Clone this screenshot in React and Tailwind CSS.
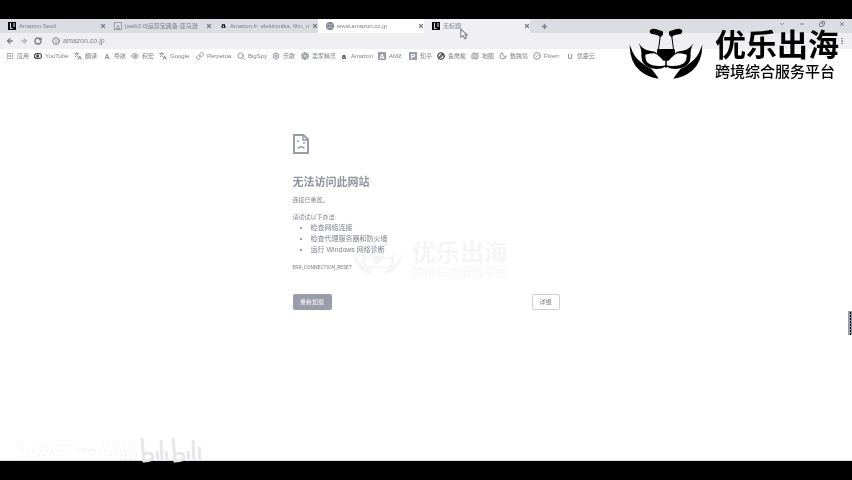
import { X, Plus, ArrowLeft, ArrowRight, RotateCw, Info, Globe, Grip, Youtube, Languages, Compass, Eye, Link, Search, Settings, Aperture, Map, Moon, CircleCheck, ChevronDown, Minus, Copy, EllipsisVertical } from "lucide-react";

const tabs = [
  { title: "Amazon Seoil", kind: "dark", tone: "bg-[#dcdde2]" },
  { title: "[web2.0]运营宝典备-亚马逊", kind: "box", tone: "bg-[#dcdde2]" },
  { title: "Amazon.fr: elektronika, film, n", kind: "a", tone: "bg-[#dcdde2]" },
  { title: "www.amazon.co.jp", kind: "globe", tone: "bg-white" },
  { title: "无标题", kind: "dark", tone: "bg-[#f0f0f3]" },
];

const bookmarks = [
  { label: "应用", icon: Grip, width: "w-[28px]" },
  { label: "YouTube", icon: Youtube, width: "w-[40px]", dark: true },
  { label: "翻译", icon: Languages, width: "w-[29px]" },
  { label: "导航", letter: "A", width: "w-[28px]" },
  { label: "积宏", icon: Eye, width: "w-[28px]" },
  { label: "Google", icon: Languages, width: "w-[37px]" },
  { label: "Perpetua", icon: Link, width: "w-[41px]" },
  { label: "BigSpy", icon: Search, width: "w-[35px]" },
  { label: "乐歌", icon: Settings, width: "w-[29px]" },
  { label: "卖家精灵", icon: Aperture, width: "w-[39px]" },
  { label: "Amazon", letter: "a", width: "w-[38px]", dark: true },
  { label: "AMZ", letter: "A", boxed: true, width: "w-[31px]" },
  { label: "知乎", letter: "P", boxed: true, width: "w-[28px]" },
  { label: "鱼鹰梭", icon: Compass, width: "w-[34px]", dark: true },
  { label: "地图", icon: Map, width: "w-[28px]" },
  { label: "数跨境", icon: Moon, width: "w-[34px]" },
  { label: "Fiverr", icon: CircleCheck, width: "w-[33px]" },
  { label: "优鹿云", letter: "U", width: "w-[34px]" },
];

const tips = ["检查网络连接", "检查代理服务器和防火墙", "运行 Windows 网络诊断"];

function TabIcon({ kind }) {
  if (kind === "globe") return <Globe className="size-2 text-[#7d8190]" strokeWidth={4} />;
  if (kind === "dark")
    return (
      <svg viewBox="0 0 8 8" className="size-2">
        <path d="M0 0h8v8H0z" fill="#0a0a0c" />
        <path d="M2.5 1v5.5h2M6 1v4" stroke="#e4e5ea" fill="none" />
      </svg>
    );
  if (kind === "a") return <span className="w-2 text-center text-[8px] font-bold text-black">a</span>;
  return <span className="grid size-2 place-items-center border border-[#9b9fab] text-[7px] text-[#8a8d9a]">A</span>;
}

function Bookmark({ item }) {
  const Icon = item.icon;
  const ink = item.dark ? "text-[#1d1d22]" : "text-[#8f93a0]";
  return (
    <a href="#" className={`flex shrink-0 items-center gap-[3px] ${item.width}`}>
      {Icon ? (
        <Icon className={`size-2 shrink-0 ${ink}`} strokeWidth={3} />
      ) : (
        <span className={`grid size-2 shrink-0 place-items-center text-[7px] font-bold ${item.boxed ? "bg-[#999ca9] text-white" : ink}`}>
          {item.letter}
        </span>
      )}
      <span className="whitespace-nowrap text-[6px]">{item.label}</span>
    </a>
  );
}

function TigerHalf() {
  return (
    <>
      <path d="M71 22Q72 14 82 14Q92 14 100 19L110 22Q113 27 110 34L104 39L99 76H96L101 38Q98 34 90 32L77 30Q71 28 71 22Z" />
      <path d="M11 62L16 74Q24 98 44 114Q60 128 76 134Q88 148 98 164Q66 160 42 140Q11 114 11 62Z" />
      <path d="M38 58Q48 73 62 78Q76 81 87 83L97 94L85 88Q72 88 58 92Q57 108 66 117Q78 126 98 126Q114 126 119 123H121V131L116 129Q108 135 92 135Q66 133 54 120Q46 111 46 96Q48 78 38 58Z" />
      <path d="M94 75H121V125H118V110H112Q106 102 98 96Q92 92 92 88Z" />
    </>
  );
}

function TigerLogo({ className }) {
  return (
    <svg viewBox="0 0 240 180" className={className} fill="currentColor" aria-hidden="true">
      <TigerHalf />
      <g transform="translate(240 0) scale(-1 1)">
        <TigerHalf />
      </g>
    </svg>
  );
}

function BrandOverlay() {
  return (
    <div className="absolute top-6 right-[13px] flex items-start gap-[9px] text-black">
      <TigerLogo className="h-[60px] w-20" />
      <div className="flex flex-col pt-1 whitespace-nowrap">
        <span className="text-[31px] leading-9 font-bold">优乐出海</span>
        <span className="text-[15px] leading-4 font-medium">跨境综合服务平台</span>
      </div>
    </div>
  );
}

function CenterMark() {
  return (
    <div aria-hidden="true" className="absolute top-[239px] left-[352px] flex gap-2 text-[#f5f5f7] mix-blend-multiply">
      <TigerLogo className="h-10 w-[52px]" />
      <div className="flex flex-col whitespace-nowrap">
        <span className="text-[24px] leading-7 font-bold">优乐出海</span>
        <span className="text-[12px] leading-3">跨境综合服务平台</span>
      </div>
    </div>
  );
}

function BottomMark() {
  return (
    <div aria-hidden="true" className="absolute bottom-[15px] left-[17px] flex">
      <svg viewBox="0 0 122 28" className="h-7 w-[122px]" fill="none" stroke="#dfe0e5" strokeDasharray="1 4">
        <path d="M1 3L5 8L1 12M6 14H18M1 20H17M19 9H60M24 14H52M22 18H46M30 22H44M86 8H121M78 14H118M94 18H120M98 22H120" />
        <path d="M61 13H79" strokeDasharray="1 1" />
      </svg>
      <svg viewBox="0 0 64 28" className="h-7 w-16" fill="none" stroke="#e6e7eb" strokeWidth="3">
        <path d="M3 1L5 24Q14 24 14 19Q13 15 5 17M18 14L19 24M22 3L23 24M27 14L28 24" />
        <path d="M34 1L36 24Q46 24 45 19Q44 15 36 17M49 14L50 24M54 3L55 24M60 10L61 24" />
      </svg>
    </div>
  );
}

export default function App() {
  return (
    <div className="relative flex min-h-screen flex-col bg-black py-[19px] font-['Liberation_Sans','Noto_Sans_CJK_SC',sans-serif] text-[#7b7f8d]">
      <header>
        <div className="flex h-[14px] bg-[#dcdde2]">
          {tabs.map((tab) => (
            <div key={tab.title} className={`flex w-[106px] items-center gap-[3px] pl-2 text-[6px] ${tab.tone}`}>
              <TabIcon kind={tab.kind} />
              <span className="flex-1 whitespace-nowrap">{tab.title}</span>
              <button aria-label="Close tab"><X className="size-[6px]" strokeWidth={5} /></button>
            </div>
          ))}
          <button aria-label="New tab" className="pl-[11px]"><Plus className="size-[7px]" strokeWidth={5} /></button>
          <div className="ml-auto flex items-center gap-[14px] pr-[7px] pb-1">
            <button aria-label="Search tabs"><ChevronDown className="size-[6px]" strokeWidth={4} /></button>
            <button aria-label="Minimize"><Minus className="size-[6px]" strokeWidth={4} /></button>
            <button aria-label="Restore"><Copy className="size-[6px] -scale-x-100" strokeWidth={4} /></button>
            <button aria-label="Close"><X className="size-[6px]" strokeWidth={4} /></button>
          </div>
        </div>
        <div className="flex h-4 items-center gap-1.5 bg-[#efeff2] px-1.5">
          <button aria-label="Back"><ArrowLeft className="size-2" strokeWidth={4} /></button>
          <button aria-label="Forward"><ArrowRight className="size-2 text-[#b5b8c2]" strokeWidth={4} /></button>
          <button aria-label="Reload"><RotateCw className="size-2" strokeWidth={4} /></button>
          <div className="ml-1 flex flex-1 items-center gap-[3px]">
            <Info className="size-2" strokeWidth={3} />
            <input aria-label="Address" defaultValue="amazon.co.jp" className="flex-1 bg-transparent text-[7px] leading-3 outline-none" />
          </div>
          <button aria-label="Menu"><EllipsisVertical className="size-2" strokeWidth={3} /></button>
        </div>
        <nav className="flex h-[15px] items-center bg-white pb-px pl-1.5">
          {bookmarks.map((item) => <Bookmark key={item.label} item={item} />)}
        </nav>
      </header>

      <main className="flex-1 border-b border-[#d9dae0] bg-white pt-[70px]">
        <div className="mx-auto max-w-[267px]">
          <svg viewBox="0 0 16 20" className="h-5 w-4" fill="none" stroke="#999ca9" strokeWidth="2" aria-hidden="true">
            <path d="M1 1H10.5L15 5.5V19H1Z" />
            <path d="M10 1V6H15" strokeWidth="1.5" />
            <path d="M4 7H6M10 9H12M4.5 14.5Q8 11 11.5 14.5" strokeWidth="1.5" />
          </svg>
          <h1 className="mt-5 text-[11px] leading-4 font-bold text-[#8f93a0]">无法访问此网站</h1>
          <p className="mt-[5px] text-[6px] leading-[10px]">连接已重置。</p>
          <p className="mt-[7px] text-[6px] leading-[10px]">请试试以下办法:</p>
          <ul className="ml-[18px] list-outside list-disc text-[7px] leading-[11px]">
            {tips.map((tip) => <li key={tip}>{tip}</li>)}
          </ul>
          <p className="mt-[7px] font-[Roboto] text-[5px] leading-[10px]">ERR_CONNECTION_RESET</p>
          <div className="mt-[22px] flex justify-between text-[6px]">
            <button className="h-4 w-[39px] rounded-xs bg-[#999ca9] text-white">重新加载</button>
            <button className="h-4 w-7 rounded-xs border border-[#cfd0d7] bg-white">详细</button>
          </div>
        </div>
      </main>

      <svg viewBox="0 0 4 26" className="absolute top-[310px] right-0 h-[26px] w-1" aria-hidden="true">
        <path d="M0 1H4V25H0Z" fill="#999ca9" />
        <path d="M2.5 2V25" stroke="#000" strokeDasharray="2 1" />
      </svg>
      <svg viewBox="0 0 10 14" className="absolute top-[28px] left-[460px] h-3 w-2" fill="#fff" stroke="#858996" strokeWidth="1.5" aria-hidden="true">
        <path d="M1 1V11L4 9L6 13L8 12L6.500 8H9Z" />
      </svg>
      <BrandOverlay />
      <CenterMark />
      <BottomMark />
    </div>
  );
}
